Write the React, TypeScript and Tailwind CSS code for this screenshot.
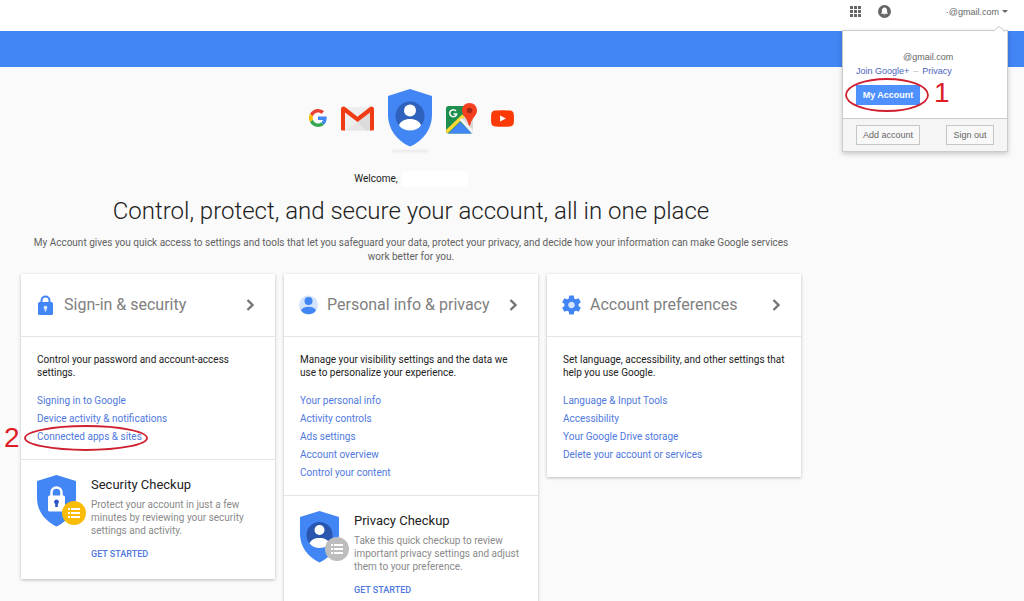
import type { ReactNode } from "react";

const CARDS = [
  {
    title: "Sign-in & security",
    icon: <LockIcon />,
    text: "Control your password and account-access settings.",
    links: ["Signing in to Google", "Device activity & notifications", "Connected apps & sites"],
    marked: "Connected apps & sites",
    checkup: {
      title: "Security Checkup",
      text: "Protect your account in just a few minutes by reviewing your security settings and activity.",
      icon: <LockShield />,
    },
  },
  {
    title: "Personal info & privacy",
    icon: <PersonIcon />,
    text: "Manage your visibility settings and the data we use to personalize your experience.",
    links: ["Your personal info", "Activity controls", "Ads settings", "Account overview", "Control your content"],
    checkup: {
      title: "Privacy Checkup",
      text: "Take this quick checkup to review important privacy settings and adjust them to your preference.",
      icon: <PersonShield />,
    },
  },
  {
    title: "Account preferences",
    icon: <GearIcon />,
    text: "Set language, accessibility, and other settings that help you use Google.",
    links: ["Language & Input Tools", "Accessibility", "Your Google Drive storage", "Delete your account or services"],
  },
];

export default function App() {
  return (
    <div className="min-h-screen bg-[#fafafa] font-[Roboto,sans-serif] text-[#212121]">
      <TopBar />
      <div className="h-9 bg-[#4285f4]" />

      <main className="mr-[202px] px-[21px] pb-6 pt-[22px]">
        <HeroIcons />

        <p className="mt-[22px] flex h-5 items-center justify-center gap-1 text-[10px] leading-5">
          Welcome,
          <span className="h-4 w-[66px] rounded-sm bg-white" />
        </p>
        <h1 className="mt-[6px] text-center text-[24px] font-light leading-8">
          Control, protect, and secure your account, all in one place
        </h1>
        <p className="mt-[9px] px-2 text-center text-[10px] leading-[14px] text-[#616161]">
          My Account gives you quick access to settings and tools that let you safeguard your data, protect your
          privacy, and decide how your information can make Google services work better for you.
        </p>

        <section className="mt-[10px] grid grid-cols-3 items-start gap-[9px]">
          {CARDS.map((card) => (
            <Card key={card.title} {...card} />
          ))}
        </section>
      </main>
    </div>
  );
}

function TopBar() {
  return (
    <header className="relative flex h-[31px] items-center justify-end bg-white pb-2 pr-4 font-['Liberation_Sans',sans-serif]">
      <button aria-label="Apps" className="mr-[17px]">
        <svg width="11" height="11" viewBox="0 0 11 11" fill="#666">
          {[0, 4, 8].map((y) => [0, 4, 8].map((x) => <rect key={`${x}-${y}`} x={x} y={y} width="3" height="3" />))}
        </svg>
      </button>
      <button aria-label="Notifications" className="mr-[55px]">
        <svg width="13" height="13" viewBox="0 0 13 13">
          <circle cx="6.5" cy="6.5" r="6.5" fill="#666" />
          <path
            d="M6.5 2.2c.4 0 .6.3.6.6 1.4.3 2 1.4 2 2.6v2l.8.9v.5H3.1v-.5l.8-.9v-2c0-1.2.7-2.3 2-2.6 0-.3.2-.6.6-.6zM5.7 9.4h1.6c0 1-1.6 1-1.6 0z"
            fill="#fff"
          />
        </svg>
      </button>
      <button className="flex items-center gap-[3px] text-[9px] leading-3 text-[#666]">
        ·@gmail.com
        <svg width="6" height="3" viewBox="0 0 6 3" fill="#666">
          <path d="M0 0h6L3 3z" />
        </svg>
      </button>
      <AccountMenu />
    </header>
  );
}

function AccountMenu() {
  return (
    <div className="absolute right-4 top-[30px] z-10 w-[166px] border border-[#ccc] bg-white text-[9px] leading-[14px] shadow-[0_2px_5px_rgba(0,0,0,0.2)]">
      <svg className="absolute -top-[5px] right-[2px]" width="12" height="6" viewBox="0 0 12 6">
        <path d="M0 5.500L6 .5l6 5" fill="#fff" stroke="#ccc" />
        <path d="M1 6h10" stroke="#fff" />
      </svg>
      <div className="px-[13px] pb-[13px] pt-[19px]">
        <p className="pl-[47px] text-[#666]">@gmail.com</p>
        <p className="flex gap-1 text-[#4a63bf]">
          <a href="#join">Join Google+</a>
          <span className="text-[#bbb]">–</span>
          <a href="#privacy">Privacy</a>
        </p>
        <div className="relative mt-[7px] w-16">
          <button className="block h-5 w-16 bg-[#4d90fe] font-bold text-white">My Account</button>
          <svg className="pointer-events-none absolute -left-[11px] -top-[7px]" width="84" height="34" viewBox="0 0 84 34">
            <ellipse cx="42" cy="17" rx="41" ry="16" fill="none" stroke="#cf2030" strokeWidth="1.800" />
          </svg>
          <span className="absolute left-[78px] top-[-8px] text-[28px] leading-8 text-[#dd1c24]">1</span>
        </div>
      </div>
      <div className="flex justify-between border-t border-[#ccc] bg-[#f5f5f5] px-[13px] py-[6px] text-[#666]">
        <button className="h-5 w-16 border border-[#c6c6c6] bg-[#f8f8f8]">Add account</button>
        <button className="h-5 w-12 border border-[#c6c6c6] bg-[#f8f8f8]">Sign out</button>
      </div>
    </div>
  );
}

type CardProps = {
  title: string;
  icon: ReactNode;
  text: string;
  links: string[];
  marked?: string;
  checkup?: { title: string; text: string; icon: ReactNode };
};

function Card({ title, icon, text, links, marked, checkup }: CardProps) {
  return (
    <article className="bg-white shadow-[0_1px_3px_rgba(0,0,0,0.25)]">
      <a href="#section" className="flex h-[62px] items-center gap-[9px] pl-[15px] pr-5">
        {icon}
        <h2 className="flex-1 whitespace-nowrap text-[16px] leading-5 text-[#808080]">{title}</h2>
        <svg width="9" height="12" viewBox="0 0 9 12" fill="none" stroke="#757575" strokeWidth="2.400">
          <path d="M1.500 1l5 5-5 5" />
        </svg>
      </a>

      <div className="border-t border-[#e4e4e4] px-4 pb-[13px] pt-4">
        <p className="text-[10px] leading-[13px]">{text}</p>
        <ul className="mt-[13px] text-[10px] leading-[18px] text-[#5079dd]">
          {links.map((link) => (
            <li key={link}>
              <span className="relative inline-block">
                <a href="#link">{link}</a>
                {link === marked && <Mark />}
              </span>
            </li>
          ))}
        </ul>
      </div>

      {checkup && (
        <div className="flex gap-[5px] border-t border-[#e4e4e4] pb-[15px] pl-[15px] pr-4 pt-[15px]">
          {checkup.icon}
          <div className="flex-1">
            <h3 className="text-[13px] leading-5">{checkup.title}</h3>
            <p className="mt-[3px] text-[10px] leading-[13px] text-[#8a8a8a]">{checkup.text}</p>
            <a href="#start" className="mt-[9px] inline-block text-[9px] font-medium leading-4 text-[#5079dd]">
              GET STARTED
            </a>
          </div>
        </div>
      )}
    </article>
  );
}

function Mark() {
  return (
    <>
      <svg className="pointer-events-none absolute -left-[14px] -top-[4px]" width="126" height="28" viewBox="0 0 126 28">
        <ellipse cx="63" cy="14" rx="61" ry="12" fill="none" stroke="#cf2030" strokeWidth="1.800" />
      </svg>
      <span className="absolute -left-[33px] top-[-6px] font-['Liberation_Sans',sans-serif] text-[28px] leading-8 text-[#dd1c24]">
        2
      </span>
    </>
  );
}

function HeroIcons() {
  return (
    <div className="flex items-center justify-center gap-[14px]">
      <svg width="18" height="18" viewBox="0 0 48 48">
        <path fill="#ea4335" d="M24 9.500c3.540 0 6.710 1.220 9.210 3.600l6.850-6.850C35.900 2.380 30.470 0 24 0 14.620 0 6.510 5.380 2.560 13.220l7.980 6.190C12.430 13.720 17.740 9.500 24 9.500z" />
        <path fill="#4285f4" d="M46.980 24.550c0-1.570-.15-3.090-.38-4.550H24v9.020h12.940c-.58 2.960-2.260 5.480-4.780 7.180l7.730 6c4.510-4.180 7.090-10.360 7.090-17.650z" />
        <path fill="#fbbc05" d="M10.530 28.590a14.500 14.500 0 0 1 0-9.180l-7.980-6.190a24 24 0 0 0 0 21.560l7.980-6.190z" />
        <path fill="#34a853" d="M24 48c6.480 0 11.930-2.130 15.890-5.810l-7.730-6c-2.150 1.450-4.920 2.300-8.160 2.300-6.260 0-11.570-4.220-13.470-9.910l-7.980 6.190C6.510 42.620 14.620 48 24 48z" />
      </svg>

      <svg width="33" height="25" viewBox="0 0 33 25">
        <rect x="1" y="1" width="31" height="23.500" rx="2" fill="#eee" />
        <path d="M4 24.500l12.500-8 12.500 8z" fill="#e6e6e6" />
        <path d="M29 6v18.500h-4L16.500 16z" fill="#dcdcdc" />
        <path d="M0 3C0 .5 2.500-.2 4 1l12.500 9.800L29 1c1.500-1.200 4-.5 4 2v20c0 1-.6 1.600-1.600 1.600H29V6.500L16.500 16 4 6.500v18.100H1.600C.6 24.600 0 24 0 23z" fill="#f03c14" />
      </svg>

      <div className="relative">
        <svg width="44" height="58" viewBox="0 0 44 58">
          <path d="M22 0l22 7v19c0 14-9 26-22 31.500C9 52 0 40 0 26V7z" fill="#4285f4" />
          <circle cx="22" cy="27" r="14.500" fill="#2f62bd" />
          <circle cx="22" cy="21.500" r="6" fill="#fff" />
          <path d="M11 36.500c1-4 5.500-6.500 11-6.500s10 2.500 11 6.500c-2.500 3.200-6.500 5-11 5s-8.500-1.800-11-5z" fill="#fff" />
        </svg>
        <div className="absolute inset-x-1 -bottom-[5px] h-[2px] rounded-full bg-[#e6e6e6] blur-[1px]" />
      </div>

      <svg width="31" height="31" viewBox="0 0 31 31">
        <clipPath id="map">
          <rect y="3" width="27" height="27.500" rx="2.500" />
        </clipPath>
        <g clipPath="url(#map)">
          <rect y="3" width="27" height="28" fill="#1e8e4e" />
          <path d="M27 3v28L15 17z" fill="#d8d8d8" />
          <path d="M14 19L28 32H1z" fill="#4285f4" />
          <path d="M-1 30.500L17.500 12.500" stroke="#fdd835" strokeWidth="3.500" />
          <path d="M14.500 16L28 30.500" stroke="#f5f5f5" strokeWidth="3" />
        </g>
        <path d="M10 8A3.500 3.500 0 1 0 10.700 11H7.500" fill="none" stroke="#fff" strokeWidth="1.500" />
        <path d="M23.500 0c4.200 0 7.500 3.200 7.500 7.400 0 5-5.400 7.600-6.500 14-.2 1.600-1.800 1.600-2 0-1.100-6.400-6.500-9-6.500-14C16 3.200 19.300 0 23.500 0z" fill="#f4401f" />
        <circle cx="23.500" cy="7.500" r="2.800" fill="#a52714" />
      </svg>

      <svg width="23" height="17" viewBox="0 0 23 17">
        <path d="M4 .6Q11.500 0 19 .6q3.300.2 3.700 3.400.6 4.500 0 9-.4 3.200-3.700 3.400-7.500.6-15 0Q.700 16.200.3 13q-.6-4.500 0-9Q.7.800 4 .600z" fill="#fb3a08" />
        <path d="M9 5.500l6 3-6 3z" fill="#fff" />
      </svg>
    </div>
  );
}

function LockIcon() {
  return (
    <svg width="19" height="20" viewBox="0 0 19 20">
      <path d="M5.500 8V5.500a4 4 0 0 1 8 0V8" fill="none" stroke="#4285f4" strokeWidth="2" />
      <rect x="2" y="7" width="15" height="13" rx="1.500" fill="#4285f4" />
      <path d="M9.500 10.700a1.900 1.900 0 0 1 1 3.500l-.4 2.300H8.900l-.4-2.300a1.900 1.900 0 0 1 1-3.500z" fill="#dbe8fd" />
    </svg>
  );
}

function PersonIcon() {
  return (
    <svg width="19" height="20" viewBox="0 0 19 20">
      <circle cx="9.500" cy="10" r="9.500" fill="#d3e3fc" />
      <circle cx="9.500" cy="6" r="4" fill="#4285f4" />
      <path d="M2 15.500c.8-2.500 3.600-3.800 7.500-3.800s6.700 1.300 7.500 3.800c-1.700 2.500-4.300 3.800-7.500 3.800S3.700 18 2 15.500z" fill="#4285f4" />
    </svg>
  );
}

function GearIcon() {
  return (
    <svg width="19" height="20" viewBox="2 2 20 20">
      <circle cx="12" cy="12" r="5" fill="#d3e3fc" />
      <path
        d="M19.430 12.980c.04-.32.07-.64.07-.98s-.03-.66-.07-.98l2.110-1.650c.19-.15.24-.42.120-.64l-2-3.460c-.12-.22-.39-.3-.61-.22l-2.490 1c-.52-.4-1.080-.73-1.690-.98l-.38-2.650C14.460 2.180 14.250 2 14 2h-4c-.25 0-.46.18-.49.42l-.38 2.650c-.61.25-1.170.59-1.690.98l-2.490-1c-.23-.09-.49 0-.61.22l-2 3.460c-.13.22-.07.49.12.64l2.110 1.650c-.04.32-.07.65-.07.98s.03.66.07.98l-2.110 1.650c-.19.15-.24.42-.12.64l2 3.460c.12.22.39.3.61.22l2.490-1c.52.4 1.080.73 1.690.98l.38 2.650c.03.24.24.42.49.42h4c.25 0 .46-.18.49-.42l.38-2.650c.61-.25 1.170-.59 1.690-.98l2.490 1c.23.09.49 0 .61-.22l2-3.460c.12-.22.07-.49-.12-.64l-2.110-1.650zM12 15.500c-1.930 0-3.500-1.570-3.500-3.500s1.570-3.500 3.500-3.500 3.500 1.570 3.500 3.500-1.570 3.500-3.500 3.500z"
        fill="#4285f4"
      />
    </svg>
  );
}

function CheckupShield({ badge, children }: { badge: string; children: ReactNode }) {
  return (
    <svg width="50" height="52" viewBox="0 0 50 52" className="shrink-0">
      <path d="M20.500 0L40 6v17c0 13-8 23-19.500 28.500C9 46 1 36 1 23V6z" fill="#4285f4" />
      {children}
      <circle cx="38" cy="38" r="12" fill={badge} />
      <g fill="#fff">
        {[33, 37, 41].map((y) => (
          <g key={y}>
            <rect x="32" y={y} width="2" height="2" />
            <rect x="35" y={y} width="9" height="2" />
          </g>
        ))}
      </g>
    </svg>
  );
}

function LockShield() {
  return (
    <CheckupShield badge="#fbbc05">
      <path d="M15.500 21v-3.500a5 5 0 0 1 10 0V21" fill="none" stroke="#fff" strokeWidth="2.500" />
      <rect x="12" y="20.500" width="17" height="16" rx="1.500" fill="#fff" />
      <path d="M20.500 24.500a2.500 2.500 0 0 1 1.300 4.600V32h-2.600v-2.900a2.500 2.500 0 0 1 1.300-4.600z" fill="#2a56c6" />
    </CheckupShield>
  );
}

function PersonShield() {
  return (
    <CheckupShield badge="#bdbdbd">
      <circle cx="20.500" cy="24" r="13" fill="#2a56b0" />
      <circle cx="20.500" cy="19" r="5" fill="#fff" />
      <path d="M10.500 32.500c1-3.500 5-5.500 10-5.500s9 2 10 5.500c-2.500 3-6 4.500-10 4.500s-7.500-1.500-10-4.500z" fill="#fff" />
    </CheckupShield>
  );
}
